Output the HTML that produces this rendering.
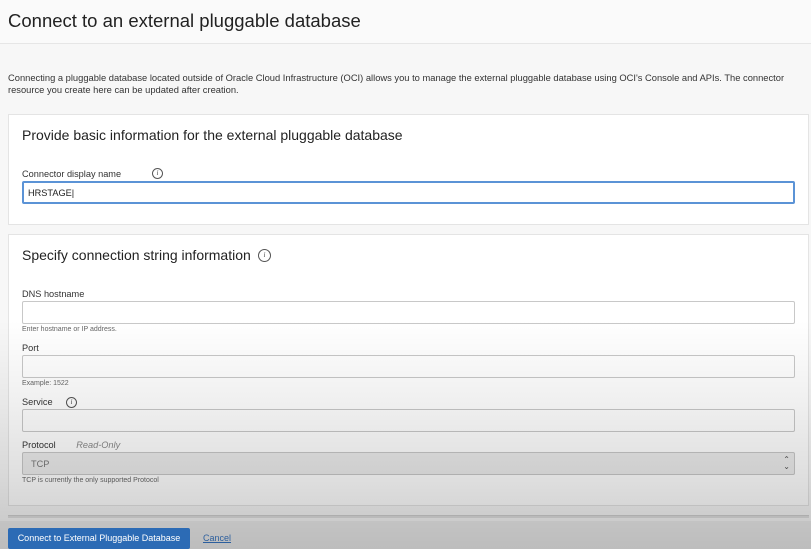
<!DOCTYPE html>
<html><head><style>
*{box-sizing:border-box;margin:0;padding:0}
body{width:811px;height:549px;overflow:hidden;background:#f7f7f7;font-family:"Liberation Sans",Arial,sans-serif;color:#333;position:relative}
.a{position:absolute}
.title{left:8px;top:10px;font-size:18.5px;color:#222;}
.hdr{left:0;top:0;width:811px;height:44px;background:#fafafa;border-bottom:1px solid #e6e6e6}
.desc{left:8px;top:72px;font-size:9.35px;line-height:12px;color:#333;width:803px;white-space:nowrap}
.box{background:#fff;border:1px solid #e4e4e4;left:8px;width:801px}
.h2{font-size:14px;color:#222}
.lbl{font-size:9.2px;color:#333}
.inp{left:22px;width:773px;height:23px;border:1px solid #c8c8c8;border-radius:2px;background:#fff}
.hint{font-size:7px;color:#666}
.info{display:inline-block;width:11px;height:11px;border:1px solid #555;border-radius:50%;font-size:7px;font-style:italic;text-align:center;line-height:9px;font-family:"Liberation Serif",serif;color:#444}
.shade{left:0;top:0;width:811px;height:549px;pointer-events:none;background:linear-gradient(to bottom,rgba(0,0,0,0) 0,rgba(0,0,0,0) 320px,rgba(0,0,0,.06) 400px,rgba(0,0,0,.13) 480px,rgba(0,0,0,.17) 515px,rgba(0,0,0,.2) 549px)}
</style></head><body>
<div class="a hdr"></div>
<div class="a title">Connect to an external pluggable database</div>
<div class="a desc">Connecting a pluggable database located outside of Oracle Cloud Infrastructure (OCI) allows you to manage the external pluggable database using OCI's Console and APIs. The connector<br>resource you create here can be updated after creation.</div>

<div class="a box" style="top:114px;height:111px"></div>
<div class="a h2" style="left:22px;top:127px">Provide basic information for the external pluggable database</div>
<div class="a lbl" style="left:22px;top:169px">Connector display name</div>
<div class="a info" style="left:152px;top:168px">i</div>
<div class="a inp" style="top:181px;border:2px solid #5b93d6;font-size:9.2px;padding:5px 0 0 4px;color:#222">HRSTAGE|</div>

<div class="a box" style="top:234px;height:272px"></div>
<div class="a h2" style="left:22px;top:247px">Specify connection string information</div>
<div class="a info" style="left:258px;top:249px;width:13px;height:13px;line-height:11px">i</div>
<div class="a lbl" style="left:22px;top:289px">DNS hostname</div>
<div class="a inp" style="top:301px"></div>
<div class="a hint" style="left:22px;top:326px">Enter hostname or IP address.</div>
<div class="a lbl" style="left:22px;top:343px">Port</div>
<div class="a inp" style="top:355px"></div>
<div class="a hint" style="left:22px;top:380px">Example: 1522</div>
<div class="a lbl" style="left:22px;top:397px">Service</div>
<div class="a info" style="left:66px;top:397px">i</div>
<div class="a inp" style="top:409px"></div>
<div class="a lbl" style="left:22px;top:440px">Protocol <i style="color:#888;margin-left:18px">Read-Only</i></div>
<div class="a inp" style="top:452px;background:#ececec;font-size:9.2px;color:#777;padding:6px 0 0 8px">TCP<span style="position:absolute;right:4px;top:3px;font-size:8px;line-height:7px;color:#555">&#8963;<br>&#8964;</span></div>
<div class="a hint" style="left:22px;top:477px">TCP is currently the only supported Protocol</div>

<div class="a" style="left:8px;top:515px;width:801px;height:3px;background:#e0e0e0;border-top:1px solid #d0d0d0"></div>
<div class="a" style="left:0;top:521px;width:811px;height:28px;background:#ececec"></div>
<div class="a shade"></div>
<div class="a" style="left:8px;top:528px;width:182px;height:21px;background:#2c6bb5;border-radius:2px;color:#fff;font-size:9px;text-align:center;line-height:21px">Connect to External Pluggable Database</div>
<div class="a" style="left:203px;top:533px;font-size:9px;color:#2c5f9e;text-decoration:underline">Cancel</div>
</body></html>
